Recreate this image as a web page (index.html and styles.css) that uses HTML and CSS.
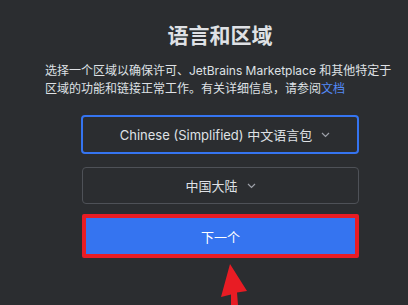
FILE: index.html
```html
<!DOCTYPE html>
<html lang="zh-CN">
<head>
<meta charset="utf-8">
<link rel="stylesheet" href="styles.css">
</head>
<body>
<div class="page">
  <h1 class="title">语言和区域</h1>
  <p class="desc">选择一个区域以确保许可、JetBrains Marketplace 和其他特定于区域的功能和链接正常工作。有关详细信息，请参阅<a class="link">文档</a></p>
  <div class="column">
    <div class="select select-focus">
      <span>Chinese (Simplified) 中文语言包</span>
      <svg class="chev" width="9" height="6" viewBox="0 0 9 6"><path d="M1 1l3.5 3.5L8 1" fill="none" stroke="#9da0a8" stroke-width="1.2"/></svg>
    </div>
    <div class="select">
      <span>中国大陆</span>
      <svg class="chev" width="9" height="6" viewBox="0 0 9 6"><path d="M1 1l3.5 3.5L8 1" fill="none" stroke="#9da0a8" stroke-width="1.2"/></svg>
    </div>
    <button class="next">下一个</button>
  </div>
  <svg class="arrow" width="40" height="45" viewBox="0 0 40 45">
    <polygon points="10,0 1,33 11,30.5 11,41 18,41 17,28.5 27,27" fill="#e81c24"/>
  </svg>
</div>
</body>
</html>
```

FILE: styles.css
```css
html, body {
  margin: 0;
  padding: 0;
  background: #2b2d30;
  height: 100%;
  overflow: hidden;
}
.page {
  position: relative;
  height: 305px;
  font-family: "Inter", "Noto Sans CJK SC", sans-serif;
  color: #dfe1e5;
  padding-top: 22px;
  box-sizing: border-box;
}
.title {
  margin: 0;
  width: 100%;
  box-sizing: border-box;
  padding-left: 32px;
  text-align: center;
  font-size: 21px;
  line-height: 28px;
  font-weight: 700;
  color: #dfe1e5;
}
.desc {
  margin: 12px 0 0 45px;
  width: 356px;
  font-size: 12px;
  line-height: 18px;
  color: #dfe1e5;
}
.link {
  color: #548af7;
}
.column {
  margin: 17px 0 0 81px;
  width: 278px;
  display: flex;
  flex-direction: column;
}
.select {
  height: 37px;
  box-sizing: border-box;
  border: 1px solid #4e5157;
  border-radius: 4px;
  margin-left: 1px;
  display: flex;
  align-items: center;
  justify-content: center;
  gap: 9px;
  font-size: 13px;
  color: #dfe1e5;
  margin-top: 13px;
}
.select-focus {
  height: 39px;
  border: 2px solid #3574f0;
  margin-left: 0;
  margin-top: 0;
}
.select-focus span {
  margin-left: 10px;
}
.select span {
  line-height: 18px;
}
.chev {
  display: block;
  margin-top: 1px;
}
.next {
  margin-top: 10px;
  margin-left: 1px;
  height: 44px;
  width: 277px;
  box-sizing: border-box;
  background: #3574f0;
  border: 4px solid #e81c24;
  border-radius: 2px;
  color: #ffffff;
  font-family: "Inter", "Noto Sans CJK SC", sans-serif;
  font-size: 13px;
  padding: 0;
}
.arrow {
  position: absolute;
  left: 220px;
  top: 264px;
}
```
